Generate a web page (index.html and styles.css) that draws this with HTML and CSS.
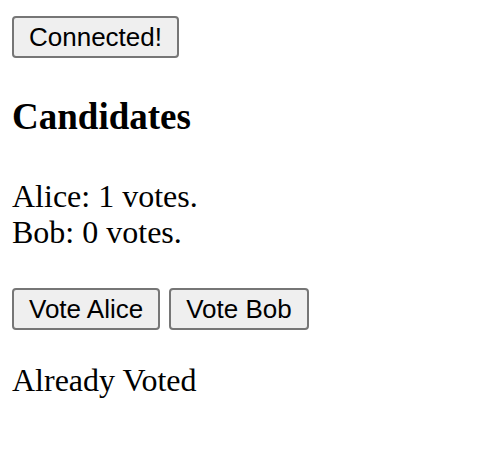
FILE: index.html
```html
<!DOCTYPE html>
<html>
<head>
<meta charset="utf-8">
<link rel="stylesheet" href="styles.css">
</head>
<body>
  <div class="status-row">
    <button class="btn">Connected!</button>
  </div>
  <h2 class="title">Candidates</h2>
  <div class="tally">
    <div class="tally-line">Alice: 1 votes.</div>
    <div class="tally-line">Bob: 0 votes.</div>
  </div>
  <div class="vote-row">
    <button class="btn">Vote Alice</button>
    <button class="btn">Vote Bob</button>
  </div>
  <div class="notice">Already Voted</div>
</body>
</html>
```
FILE: styles.css
```css
html, body {
  background: #ffffff;
}
body {
  margin: 0;
  padding: 16px 12px 0 12px;
  font-family: "Liberation Serif", "Times New Roman", serif;
  font-size: 32px;
  color: #000000;
}
.status-row {
  display: flex;
}
.btn {
  font-family: "Liberation Sans", Arial, sans-serif;
  font-size: 26px;
  line-height: 30px;
  height: 42px;
  padding: 4px 15px;
  border: 2px solid #767676;
  border-radius: 4px;
  background: #efefef;
  color: #000000;
  box-sizing: border-box;
  margin: 0;
}
.title {
  margin: 37px 0 0 0;
  font-size: 37px;
  line-height: 43px;
  font-weight: bold;
}
.tally {
  margin-top: 40px;
  line-height: 36px;
}
.vote-row {
  display: flex;
  gap: 9px;
  margin-top: 38px;
}
.notice {
  margin-top: 32px;
  line-height: 36px;
}
```
